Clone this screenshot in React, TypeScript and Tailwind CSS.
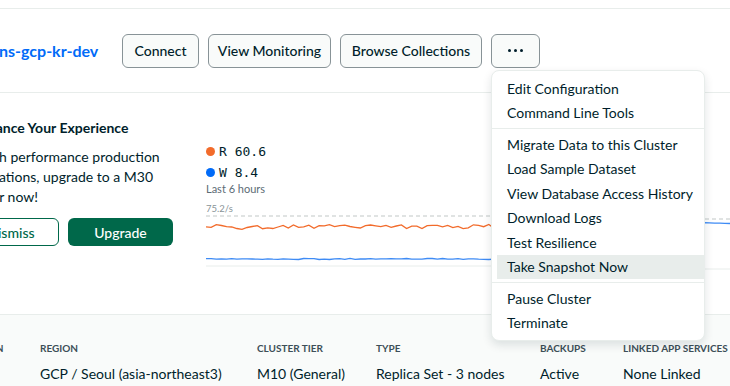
import React from 'react'

const font = { fontFamily: 'Lato, "Noto Sans", sans-serif' }
const mono = { fontFamily: '"DejaVu Sans Mono", monospace' }

function wiggle(seed: number, n: number, base: number, amp: number, spike: number) {
  const pts: string[] = []
  let s = seed
  for (let i = 0; i <= n; i++) {
    s = (s * 9301 + 49297) % 233280
    const r = s / 233280
    let y = base + (r - 0.5) * amp
    if (r > 0.88) y -= spike
    if (r < 0.08) y += spike
    pts.push(`${(i * 360) / n},${y.toFixed(1)}`)
  }
  return pts.join(' ')
}

function Chart({ orange, blue }: { orange?: string; blue: string }) {
  return (
    <svg width="360" height="54" viewBox="0 0 360 54" className="block">
      <line x1="0" y1="1" x2="360" y2="1" stroke="#C1C7C6" strokeDasharray="4 3" strokeWidth="1" />
      {orange && <polyline points={orange} fill="none" stroke="#F26B2B" strokeWidth="1.3" />}
      <polyline points={blue} fill="none" stroke="#3E8BF5" strokeWidth="1.3" />
      <line x1="0" y1="51" x2="360" y2="51" stroke="#E8EDEB" strokeWidth="1" />
    </svg>
  )
}

const menu = [
  ['Edit Configuration', 'Command Line Tools'],
  ['Migrate Data to this Cluster', 'Load Sample Dataset', 'View Database Access History', 'Download Logs', 'Test Resilience', 'Take Snapshot Now'],
  ['Pause Cluster', 'Terminate'],
]

const stats = [
  { w: 'w-[80px]', label: 'VERSION', value: '7.0.12' },
  { w: 'w-[217px]', label: 'REGION', value: 'GCP / Seoul (asia-northeast3)' },
  { w: 'w-[119px]', label: 'CLUSTER TIER', value: 'M10 (General)' },
  { w: 'w-[164px]', label: 'TYPE', value: 'Replica Set - 3 nodes' },
  { w: 'w-[83px]', label: 'BACKUPS', value: 'Active' },
  { w: 'w-[160px]', label: 'LINKED APP SERVICES', value: 'None Linked' },
]

const headerButtons = [
  { label: 'Connect', w: 'w-[77px]' },
  { label: 'View Monitoring', w: 'w-[123px]' },
  { label: 'Browse Collections', w: 'w-[142px]' },
]

export default function App() {
  const orange = wiggle(7, 70, 12, 6, 4)
  const blueLow = wiggle(3, 70, 44, 1.5, 0.5)
  const blueHigh = wiggle(11, 70, 5, 2, 1)

  return (
    <div className="relative w-[730px] h-[386px] overflow-hidden bg-white text-[#001E2B]" style={font}>
      <div className="h-[9px] border-b border-[#E8EDEB]" />

      {/* Header */}
      <div className="h-[84px] flex items-center border-b border-[#E8EDEB]">
        <div className="w-[123px] ml-[-1px] text-[16px] font-bold text-[#016BF8] whitespace-nowrap">ns-gcp-kr-dev</div>
        <div className="flex gap-[9px]">
          {headerButtons.map((b) => (
            <button
              key={b.label}
              className={`${b.w} h-[34px] rounded-[6px] border border-[#889397] bg-[#F9FBFA] text-[14px] font-medium text-[#001E2B]`}
            >
              {b.label}
            </button>
          ))}
          <button className="h-[34px] w-[49px] rounded-[6px] border border-[#889397] bg-[#F9FBFA] flex items-center justify-center gap-[3px]">
            <span className="w-[3px] h-[3px] rounded-full bg-[#001E2B]" />
            <span className="w-[3px] h-[3px] rounded-full bg-[#001E2B]" />
            <span className="w-[3px] h-[3px] rounded-full bg-[#001E2B]" />
          </button>
        </div>
      </div>

      {/* Middle */}
      <div className="h-[221px] flex">
        <div className="ml-[-37px] w-[210px] pt-[26px] shrink-0">
          <div className="ml-[9px] text-[14px] font-bold leading-[18px] whitespace-nowrap">Enhance Your Experience</div>
          <p className="mt-[10px] text-[14px] leading-[20px] whitespace-nowrap">
            <span className="ml-[-6px]">For high performance production</span>
            <br />
            applications, upgrade to a M30
            <br />
            cluster now!
          </p>
          <div className="mt-[11px] flex gap-[9px]">
            <button className="h-[28px] w-[96px] rounded-[6px] border border-[#00684A] bg-white text-[14px] font-medium text-[#00684A]">
              Dismiss
            </button>
            <button className="h-[28px] w-[105px] rounded-[6px] bg-[#00684A] text-[14px] font-medium text-white">
              Upgrade
            </button>
          </div>
        </div>

        <div className="ml-[33px] w-[360px] shrink-0 pt-[48px]">
          <div className="flex items-center gap-[4px] h-[21px] text-[13px]" style={mono}>
            <span className="w-[9px] h-[9px] rounded-full bg-[#F26B2B]" />R 60.6
          </div>
          <div className="flex items-center gap-[4px] h-[21px] text-[13px]" style={mono}>
            <span className="w-[9px] h-[9px] rounded-full bg-[#016BF8]" />W 8.4
          </div>
          <div className="h-[16px] mt-[-2px] leading-[16px] text-[11px] text-[#5C6C75]">Last 6 hours</div>
          <div className="mt-[6px] h-[12px] leading-[12px] text-[9.5px] text-[#889397]">75.2/s</div>
          <Chart orange={orange} blue={blueLow} />
        </div>

        <div className="ml-[20px] w-[360px] shrink-0 pt-[125px]">
          <Chart blue={blueHigh} />
        </div>
      </div>

      {/* Stats */}
      <div className="h-[80px] border-t border-[#E8EDEB] bg-[#F9FBFA] flex pt-[26px]">
        <div className="flex ml-[-40px]">
          {stats.map((s) => (
            <div key={s.label} className={`${s.w} shrink-0`}>
              <div className="text-[10px] font-bold leading-[14px] text-[#3D4F58] whitespace-nowrap">{s.label}</div>
              <div className="mt-[10px] text-[14px] leading-[18px] whitespace-nowrap">{s.value}</div>
            </div>
          ))}
        </div>
      </div>

      {/* Dropdown menu */}
      <div className="absolute left-[491px] top-[70px] w-[214px] bg-white rounded-[8px] border border-[#E8EDEB] shadow-[0_4px_10px_rgba(0,30,43,0.12)] py-[5px]">
        {menu.map((group, gi) => (
          <div key={gi}>
            {gi > 0 && <div className="my-[3px] h-px bg-[#E8EDEB]" />}
            {group.map((item) => (
              <div
                key={item}
                className={`h-[24.5px] flex items-center ml-[5px] pl-[10px] text-[14px] whitespace-nowrap ${
                  item === 'Take Snapshot Now' ? 'bg-[#E8EDEB]' : ''
                }`}
              >
                {item}
              </div>
            ))}
          </div>
        ))}
      </div>
    </div>
  )
}
